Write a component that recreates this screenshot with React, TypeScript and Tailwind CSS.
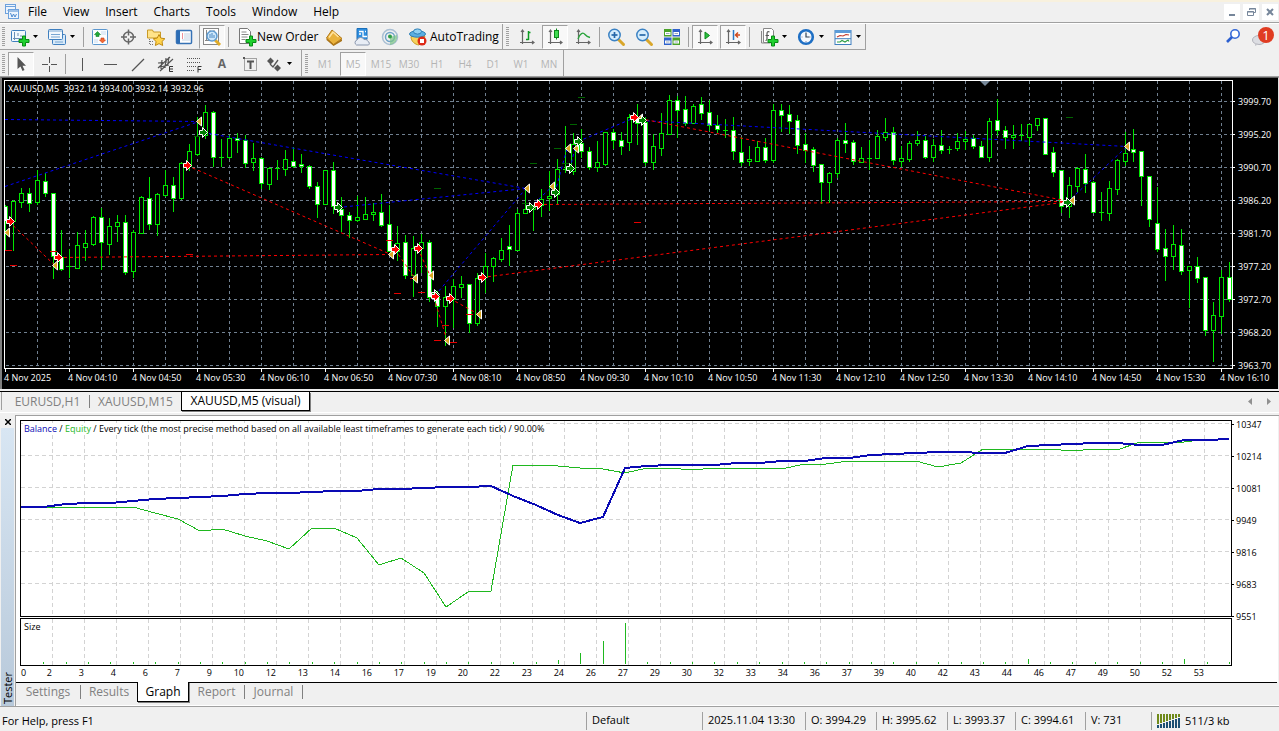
import { FC, ReactNode } from "react";

// [high, low, open, close], counted down from the top of the scale, 22 to a dollar
const candles: number[][] = [
  [382, 515, 384, 430], [366, 515, 430, 370], [331, 388, 371, 346], [331, 398, 346, 374],
  [277, 379, 371, 307], [286, 353, 310, 346], [346, 599, 346, 534], [457, 577, 537, 572],
  [514, 596, 564, 564], [462, 569, 569, 502], [457, 545, 506, 496], [415, 500, 497, 418],
  [389, 572, 418, 493], [421, 527, 497, 445], [411, 488, 445, 433], [411, 587, 433, 583],
  [457, 596, 578, 463], [353, 466, 464, 357], [298, 452, 360, 437], [346, 470, 437, 349],
  [275, 353, 350, 322], [298, 398, 322, 359], [252, 362, 359, 256], [198, 275, 265, 220],
  [117, 230, 227, 175], [81, 179, 170, 103], [100, 263, 103, 238], [182, 263, 237, 237],
  [170, 239, 236, 181], [166, 221, 179, 187], [170, 266, 187, 254], [194, 275, 253, 241],
  [238, 329, 241, 314], [268, 332, 317, 271], [245, 302, 271, 271], [215, 290, 272, 244],
  [206, 266, 248, 263], [228, 281, 257, 265], [262, 329, 265, 323], [312, 417, 325, 377],
  [277, 377, 377, 277], [252, 404, 277, 385], [358, 458, 394, 412], [403, 476, 412, 425],
  [354, 430, 425, 418], [358, 422, 422, 409], [376, 425, 409, 401], [349, 443, 401, 440],
  [382, 520, 439, 520], [445, 545, 518, 496], [472, 599, 493, 590], [475, 653, 590, 511],
  [468, 581, 511, 493], [485, 668, 493, 656], [640, 743, 656, 683], [625, 800, 683, 658],
  [602, 748, 662, 625], [595, 656, 626, 619], [619, 762, 619, 734], [586, 740, 734, 601],
  [526, 642, 598, 565], [536, 608, 563, 541], [480, 550, 542, 515], [442, 560, 505, 514],
  [392, 517, 517, 406], [330, 406, 406, 394], [380, 455, 394, 388], [334, 413, 380, 364],
  [280, 395, 361, 355], [243, 377, 349, 274], [145, 281, 274, 274], [166, 287, 278, 199],
  [152, 238, 196, 220], [208, 272, 220, 266], [190, 278, 268, 253], [163, 260, 257, 163],
  [154, 210, 163, 187], [163, 227, 187, 203], [109, 215, 191, 118], [79, 197, 118, 134],
  [118, 260, 133, 251], [168, 272, 251, 205], [105, 230, 209, 166], [51, 167, 167, 67],
  [54, 177, 67, 95], [54, 141, 94, 134], [78, 134, 134, 85], [57, 122, 79, 104],
  [67, 156, 103, 140], [111, 162, 141, 152], [123, 177, 155, 155], [117, 242, 157, 218],
  [178, 262, 223, 251], [205, 260, 250, 244], [189, 248, 248, 208], [180, 251, 208, 245],
  [78, 251, 245, 97], [78, 158, 97, 110], [81, 165, 109, 128], [111, 224, 127, 200],
  [165, 251, 199, 215], [207, 278, 214, 260], [259, 375, 259, 311], [281, 373, 311, 286],
  [180, 297, 284, 187], [135, 221, 187, 194], [187, 257, 193, 248], [207, 251, 251, 241],
  [186, 272, 239, 239], [156, 239, 239, 175], [120, 185, 176, 163], [147, 257, 163, 245],
  [204, 263, 248, 241], [189, 248, 242, 196], [159, 200, 194, 187], [175, 239, 187, 236],
  [183, 248, 236, 202], [156, 224, 202, 215], [205, 224, 212, 212], [165, 215, 209, 190],
  [160, 212, 190, 184], [171, 209, 181, 203], [189, 236, 205, 236], [120, 248, 236, 130],
  [63, 171, 127, 155], [144, 209, 157, 176], [141, 209, 176, 170], [138, 185, 172, 172],
  [139, 200, 176, 139], [121, 155, 140, 121], [121, 227, 121, 227], [207, 293, 223, 281],
  [277, 402, 277, 383], [297, 416, 383, 322], [268, 342, 323, 271], [228, 342, 274, 314],
  [308, 401, 313, 401], [342, 425, 402, 402], [309, 425, 404, 331], [243, 347, 332, 247],
  [162, 262, 248, 226], [153, 248, 214, 221], [220, 380, 220, 293], [295, 443, 295, 422],
  [327, 520, 436, 512], [453, 605, 511, 533], [441, 572, 533, 499], [453, 587, 502, 578],
  [565, 686, 575, 565], [537, 611, 565, 599], [598, 770, 598, 755], [672, 848, 755, 712],
  [576, 766, 713, 598], [552, 668, 598, 662],
];

// trade lines: x1, y1, x2, y2
const buyLines = [
  [0, 38, 194, 40], [0, 105, 194, 40], [198, 51, 521, 107], [333, 126, 521, 107],
  [430, 214, 521, 107], [525, 126, 547, 105], [550, 111, 562, 67], [565, 87, 570, 67],
  [573, 60, 630, 36], [636, 39, 1122, 65], [1062, 121, 1122, 65],
];
const sellLines = [
  [4, 140, 50, 184], [53, 176, 386, 173], [182, 84, 386, 173], [390, 168, 410, 197],
  [413, 167, 425, 194], [429, 216, 442, 259], [445, 217, 474, 233], [477, 196, 1065, 120],
  [533, 123, 1065, 120], [629, 36, 1065, 120],
];
const sellStops = [
  [0, 169], [5, 184], [45, 170], [181, 173], [381, 159], [389, 212], [413, 211], [405, 197],
  [429, 259], [445, 261], [437, 244], [461, 233], [629, 141],
];
const buyStops = [
  [429, 107], [525, 82], [549, 67], [565, 43], [573, 16], [517, 122], [557, 82], [1061, 36], [189, 55],
];
const buys = [
  [198, 51], [333, 126], [430, 213], [525, 126], [550, 111], [565, 87], [573, 60], [637, 39], [1062, 121],
];
const sells = [
  [5, 140], [53, 176], [182, 84], [390, 168], [413, 167], [430, 215], [445, 217], [477, 196], [533, 123], [629, 36],
];
const closes = [
  [2, 151], [50, 184], [194, 40], [386, 173], [410, 197], [426, 194], [442, 259], [474, 233],
  [522, 107], [547, 105], [563, 67], [571, 67], [635, 37], [1122, 65], [1067, 119],
];

const prices = ["3999.70", "3995.20", "3990.70", "3986.20", "3981.70", "3977.20", "3972.70", "3968.20", "3963.70"];
const times = [
  "2025", "04:10", "04:50", "05:30", "06:10", "06:50", "07:30", "08:10", "08:50", "09:30",
  "10:10", "10:50", "11:30", "12:10", "12:50", "13:30", "14:10", "14:50", "15:30", "16:10",
];

const balance = [
  290, 290, 283, 280, 278, 273, 267, 265, 261, 257, 253, 250, 248, 247, 244, 242, 238, 237, 235, 232,
  230, 227, 258, 284, 316, 340, 322, 174, 169, 166, 165, 164, 159, 158, 153, 152, 145, 144, 136, 132,
  129, 126, 126, 129, 129, 108, 106, 102, 99, 99, 105, 105, 90, 90, 87,
];
const equity = [
  290, 292, 290, 295, 290, 290, 309, 328, 364, 358, 377, 394, 418, 355, 355, 384, 466, 445, 488, 592,
  545, 544, 166, 166, 169, 173, 178, 189, 174, 175, 181, 173, 173, 173, 176, 163, 163, 154, 154, 157,
  154, 172, 159, 118, 118, 118, 118, 122, 118, 121, 97, 97, 97, 87, 87,
];
const bigSizes: Record<number, number> = { 24: 4, 25: 11, 26: 23, 27: 41, 45: 5, 52: 5 };
const equityScale = ["10347", "10214", "10081", "9949", "9816", "9683", "9551"];
const tradeNumbers = [
  3, 4, 6, 7, 9, 10, 12, 13, 14, 16, 17, 19, 20, 22, 23, 24, 26, 27, 29, 30, 32, 33, 34, 36, 37, 39,
  40, 42, 43, 44, 46, 47, 49, 50, 52, 53,
];

const range = (n: number) => Array.from({ length: n }, (_, i) => i);
const level = (v: number) => Math.round(v / 3) - 3;
const curve = (values: number[]) =>
  values.map((v, i) => `${Math.round(i * 22.37)},${Math.round(v / 3) - 11}`).join(" ");

interface IconProps {
  children: ReactNode;
}

const Icon: FC<IconProps> = ({ children }) => (
  <svg viewBox="0 0 20 20" className="h-5 w-5 shrink-0" fill="none" aria-hidden="true">
    {children}
  </svg>
);

const Plus = () => (
  <path d="M12.5 9h3v3.500h3.500v3h-3.500v3.500h-3v-3.500h-3.500v-3h3.500z" fill="#1fd02f" stroke="#078a14" />
);

const NewChartIcon = () => (
  <Icon>
    <rect x="1.500" y="3.500" width="14" height="11" rx="1" fill="#f2f8fd" stroke="#3f7fbf" />
    <path d="M4.500 5v8M3 11.500h9M4 6.500h1M8 6v3M11 8v2" stroke="#6a8fb5" />
    <Plus />
  </Icon>
);
const ProfilesIcon = () => (
  <Icon>
    <rect x="5.500" y="7.500" width="13" height="10" rx="1" fill="#d7e9f8" stroke="#3f7fbf" />
    <rect x="1.500" y="2.500" width="14" height="10" rx="1" fill="#f2f8fd" stroke="#3f7fbf" />
    <path d="M2 4h13M4 7.500h9M4 10h9" stroke="#78a6d2" />
    <path d="M8 15h8" stroke="#78a6d2" />
  </Icon>
);
const MarketIcon = () => (
  <Icon>
    <rect x="2.500" y="2.500" width="15" height="15" rx="1" fill="#fbfdff" stroke="#5b97cf" />
    <path d="M11 5h5M11 7h5M4 13h4M4 15h4" stroke="#c9dcef" />
    <path d="M7.500 4.500l3 3H9v2H6v-2H4.500z" fill="#22a93a" stroke="#118526" strokeWidth=".6" />
    <path d="M12.500 16l-3-3H11v-2h3v2h1.500z" fill="#f36a35" stroke="#cc3d12" strokeWidth=".6" />
  </Icon>
);
const TargetIcon = () => (
  <Icon>
    <circle cx="10.500" cy="10" r="5" stroke="#666" strokeWidth="1.500" />
    <path d="M10.500 2.500v6M10.500 11.500v6M3 10h6M12 10h6" stroke="#666" strokeWidth="1.500" />
  </Icon>
);
const FolderStarIcon = () => (
  <Icon>
    <path d="M1.500 3h5l1 2h7v6h-13z" fill="#ffe38a" stroke="#c99a26" />
    <path d="M3.500 12v5.500M4 14.500h4M4 17.500h4" stroke="#777" strokeDasharray="1 1" />
    <path d="M13 7.500l1.900 3.600 4 .6-2.900 2.800.7 4-3.700-1.900-3.600 1.900.7-4L7.200 11.700l4-.6z" fill="#ffd34d" stroke="#c08a10" />
  </Icon>
);
const TerminalIcon = () => (
  <Icon>
    <rect x="2.500" y="3.500" width="15" height="13" rx="1" fill="#fff" stroke="#3672b5" strokeWidth="1.500" />
    <rect x="3" y="4" width="3" height="12" fill="#2c6db5" />
    <path d="M8 7h1M8 9h1M8 11h1" stroke="#d23" />
    <path d="M10 7h6M10 9h6M10 11h6M8 13h8" stroke="#c3d3e4" />
  </Icon>
);
const TesterIcon = () => (
  <Icon>
    <rect x="1.500" y="1.500" width="15" height="16" fill="#fff" stroke="#888" />
    <path d="M4.500 3v11M8 3v4M12 3v4M3 13.500h6" stroke="#888" />
    <path d="M13 13l5 5" stroke="#e0ac2a" strokeWidth="3" />
    <circle cx="10" cy="9" r="5" fill="#cfe8fb" stroke="#5f9bd0" strokeWidth="1.500" />
    <path d="M8 7v4M10 6v5M12 8v3" stroke="#4a88c2" />
  </Icon>
);
const NewOrderIcon = () => (
  <Icon>
    <path d="M2.500 1.500h8l3 3v12h-11z" fill="#fff" stroke="#777" />
    <path d="M4.500 5h5M4.500 7.500h7M4.500 10h6M4.500 12.500h4" stroke="#888" />
    <Plus />
  </Icon>
);
const GoldIcon = () => (
  <Icon>
    <path d="M2.500 11l7 6 8.500-5v2l-8.500 5-7-6z" fill="#a9741a" />
    <path d="M2.500 11L8 3l10 8.500-8.500 6z" fill="#e9b23c" stroke="#b27816" />
    <path d="M5 10.500l4-5.500 5.500 5" stroke="#ffe3a0" strokeWidth="1.500" />
  </Icon>
);
const HostingIcon = () => (
  <Icon>
    <path d="M5 1.500h10v11H5z" fill="#2f8fe0" stroke="#1b6fb9" />
    <path d="M7 4.500h4v5h4M13 4.500h1M7 7h2" stroke="#fff" strokeWidth="1.300" />
    <path d="M4.500 18a2.700 2.700 0 01.5-5 3.800 3.800 0 017-.5 3.300 3.300 0 014 2 2 2 0 01.5 3.500z" fill="#e8edf5" stroke="#8996ad" />
  </Icon>
);
const SignalIcon = () => (
  <Icon>
    <circle cx="10" cy="10" r="7.500" stroke="#a9bfd3" strokeWidth="1.500" />
    <circle cx="10" cy="10" r="4.500" stroke="#6fa3c9" strokeWidth="1.500" />
    <path d="M10 10v8a8 8 0 007-10" fill="#7cc486" opacity=".7" />
    <circle cx="10" cy="9.500" r="2" fill="#2f9e47" />
  </Icon>
);
const AutoIcon = () => (
  <Icon>
    <path d="M3 9.500c0 5 4 8 8 8.500l6-8.500z" fill="#f6d25b" stroke="#c69a24" />
    <ellipse cx="9.500" cy="7" rx="8" ry="3.200" fill="#5aaee0" stroke="#2d7fb6" />
    <ellipse cx="9.500" cy="4.500" rx="4" ry="2.600" fill="#8fd0f2" stroke="#2d7fb6" />
    <circle cx="14" cy="14" r="4.500" fill="#dd2a17" />
    <rect x="12" y="12" width="4" height="4" fill="#fff" />
  </Icon>
);

const Axes = () => <path d="M5.500 3v14M3 15.500h14M4 5l1.500-2L7 5M15 14l2 1.500-2 1.500" stroke="#666" strokeWidth="1.200" />;

const BarsIcon = () => (
  <Icon>
    <Axes />
    <path d="M11.500 4v9M9 12.500h2.500M11.500 5.500h2" stroke="#0c9a22" strokeWidth="1.500" />
  </Icon>
);
const CandlesIcon = () => (
  <Icon>
    <Axes />
    <path d="M11.500 1.500v11" stroke="#0c8a1c" />
    <rect x="9.500" y="3.500" width="4" height="7" fill="#3fdc50" stroke="#0c8a1c" />
  </Icon>
);
const LineIcon = () => (
  <Icon>
    <Axes />
    <path d="M5 12c2-6 5-7 7-4.500 1.500 1.800 3 2.500 5 3" stroke="#27a33a" strokeWidth="1.300" />
  </Icon>
);
const LensIcon: FC<{ zoomIn?: boolean }> = ({ zoomIn }) => (
  <Icon>
    <path d="M12.500 12.500l5 5" stroke="#d9a62a" strokeWidth="3" strokeLinecap="round" />
    <circle cx="8.500" cy="8" r="5.700" fill="#d5edfc" stroke="#3b82c4" strokeWidth="1.500" />
    <path d="M5.500 8h6" stroke="#2567a8" strokeWidth="1.700" />
    {zoomIn && <path d="M8.500 5v6" stroke="#2567a8" strokeWidth="1.700" />}
  </Icon>
);
const TileIcon = () => (
  <Icon>
    <rect x="2" y="2" width="7.500" height="7.500" fill="#4aa32a" />
    <rect x="10.500" y="2" width="7.500" height="7.500" fill="#2f62cc" />
    <rect x="2" y="10.500" width="7.500" height="7.500" fill="#2f62cc" />
    <rect x="10.500" y="10.500" width="7.500" height="7.500" fill="#4aa32a" />
    <path d="M3 6.500h5.500M11.500 6.500H17M3 15h5.500M11.500 15H17" stroke="#fff" strokeWidth="3" />
    <path d="M4 6.500h3.500M12.500 6.500H16M4 15h3.500M12.500 15H16" stroke="#9ab" />
  </Icon>
);
const ScrollIcon = () => (
  <Icon>
    <Axes />
    <path d="M10 5v7l4.500-3.500z" fill="#2bbf3f" stroke="#0c8a1c" />
  </Icon>
);
const ShiftIcon = () => (
  <Icon>
    <Axes />
    <path d="M10.500 3v10" stroke="#2a78c4" strokeWidth="1.500" />
    <path d="M17 8h-4M15 5.500L12.500 8l2.500 2.500" stroke="#d04a1c" strokeWidth="1.500" />
  </Icon>
);
const IndicatorsIcon = () => (
  <Icon>
    <path d="M4.500 1.500h8l2 2v12h-10z" fill="#fff" stroke="#888" />
    <path d="M2.500 4v12h9" stroke="#888" />
    <path d="M10.500 5c-2-1-2.500 0-2.500 2v5c0 1-.5 1.500-1.500 1.500M6.500 8.500h3.500" stroke="#555" strokeWidth="1.200" />
    <Plus />
  </Icon>
);
const ClockIcon = () => (
  <Icon>
    <circle cx="10" cy="10" r="6.800" fill="#f4f9fe" stroke="#1e6fc4" strokeWidth="2.600" />
    <path d="M10 5.500V10h3.500" stroke="#345" strokeWidth="1.200" />
    <path d="M10 15v-1M5.500 10h1M14.500 10h-1" stroke="#88a" />
  </Icon>
);
const TemplateIcon = () => (
  <Icon>
    <rect x="2" y="3.500" width="16" height="14" fill="#fff" stroke="#3f7fbf" />
    <rect x="2" y="3" width="16" height="3" fill="#5b9bd8" />
    <path d="M4 10l3-1.500 3 .5 3-1.500 3 .5" stroke="#c0392b" strokeWidth="1.200" />
    <path d="M4 15h3l2-1.500 3 1.500 3-2 1 1.500" stroke="#2f9e47" strokeWidth="1.200" />
    <path d="M2 11.700h16" stroke="#3f7fbf" />
  </Icon>
);

interface ButtonProps {
  label: string;
  children: ReactNode;
  pressed?: boolean;
}

const ToolButton: FC<ButtonProps> = ({ label, children, pressed }) => (
  <button
    aria-label={label}
    aria-pressed={pressed}
    className={
      pressed
        ? "mx-px flex h-6 w-[26px] items-center justify-center border border-t-[#a0a0a0] border-r-white border-b-white border-l-[#a0a0a0] bg-[#f8f8f8]"
        : "flex h-6 w-7 items-center justify-center"
    }
  >
    {children}
  </button>
);

const Caret = () => <svg viewBox="0 0 5 3" className="h-[3px] w-[5px]"><path d="M0 0h5L2.500 3z" /></svg>;

const DropButton: FC<ButtonProps> = ({ label, children }) => (
  <button aria-label={label} aria-haspopup="menu" className="flex h-6 items-center gap-[3px]">
    {children}
    <Caret />
  </button>
);

const Divider = () => <div className="mx-[2px] h-5 w-px bg-[#a0a0a0]" />;
const Grip = () => (
  <div className="ml-[2px] h-5 w-[3px] bg-[repeating-linear-gradient(#a0a0a0_0_1px,transparent_1px_2px)]" />
);

const MenuBar = () => (
  <div className="flex h-[21px] items-center border-b border-[#a0a0a0] pl-1">
    <svg viewBox="0 0 16 16" className="h-4 w-4" fill="none">
      <rect x="1.500" y=".5" width="10" height="9" fill="#eef5fd" stroke="#6ea2dc" />
      <path d="M2 2.500h9M3.500 7l2-2 1.500 2 2-2" stroke="#6ea2dc" />
      <rect x="4.500" y="5.500" width="10" height="9" fill="#eef5fd" stroke="#6ea2dc" />
      <path d="M5 7h9M6.500 9l1.500 4 1.500-3 1.500 3 1.500-3" stroke="#4f8bd0" />
    </svg>
    <nav className="flex flex-1 gap-4 pl-2">
      {["File", "View", "Insert", "Charts", "Tools", "Window", "Help"].map((item) => (
        <button key={item}>{item}</button>
      ))}
    </nav>
    <div className="flex gap-[3px] pr-px text-[#76869a]">
      <button aria-label="Minimize" className="flex h-4 w-4 justify-center bg-white">
        <svg viewBox="0 0 16 16" className="h-4 w-4"><path d="M5 10h6v2H5z" fill="currentColor" /></svg>
      </button>
      <button aria-label="Restore" className="h-4 w-4 bg-white">
        <svg viewBox="0 0 16 16" className="h-4 w-4" fill="none" stroke="currentColor">
          <path d="M6.500 6V4.500h6v4H11M6 5h7" />
          <path d="M4.500 7.500h6v4h-6zM4 8h7" />
        </svg>
      </button>
      <button aria-label="Close" className="h-4 w-4 bg-white">
        <svg viewBox="0 0 16 16" className="h-4 w-4"><path d="M5 5l6 6M11 5l-6 6" stroke="currentColor" strokeWidth="2" /></svg>
      </button>
    </div>
  </div>
);

const MainToolbar = () => (
  <div className="flex h-[27px] items-start border-t border-white">
    <div className="flex h-[26px] items-center border-r border-b border-[#a0a0a0]">
      <Grip />
      <div className="flex gap-[9px] pr-[6px] pl-[5px]">
        <DropButton label="New chart"><NewChartIcon /></DropButton>
        <DropButton label="Profiles"><ProfilesIcon /></DropButton>
      </div>
      <Divider />
      <ToolButton label="Market Watch"><MarketIcon /></ToolButton>
      <ToolButton label="Data Window"><TargetIcon /></ToolButton>
      <ToolButton label="Navigator"><FolderStarIcon /></ToolButton>
      <ToolButton label="Terminal"><TerminalIcon /></ToolButton>
      <ToolButton label="Strategy Tester" pressed><TesterIcon /></ToolButton>
      <Divider />
      <button className="flex h-6 w-[89px] items-center pl-[6px] whitespace-nowrap">
        <NewOrderIcon />
        New Order
      </button>
      <ToolButton label="MetaEditor"><GoldIcon /></ToolButton>
      <ToolButton label="Virtual hosting"><HostingIcon /></ToolButton>
      <ToolButton label="Signals"><SignalIcon /></ToolButton>
      <button className="flex h-6 w-[98px] items-center gap-[2px] pl-1 whitespace-nowrap">
        <AutoIcon />
        AutoTrading
      </button>
    </div>
    <div className="flex h-[26px] items-center border-r border-b border-[#a0a0a0] pl-px">
      <Grip />
      <div className="w-1" />
      <ToolButton label="Bar chart"><BarsIcon /></ToolButton>
      <ToolButton label="Candlesticks" pressed><CandlesIcon /></ToolButton>
      <ToolButton label="Line chart"><LineIcon /></ToolButton>
      <Divider />
      <ToolButton label="Zoom in"><LensIcon zoomIn /></ToolButton>
      <ToolButton label="Zoom out"><LensIcon /></ToolButton>
      <ToolButton label="Tile windows"><TileIcon /></ToolButton>
      <Divider />
      <ToolButton label="Auto scroll" pressed><ScrollIcon /></ToolButton>
      <ToolButton label="Chart shift" pressed><ShiftIcon /></ToolButton>
      <Divider />
      <div className="flex gap-[9px] pr-1 pl-[7px]">
        <DropButton label="Indicators"><IndicatorsIcon /></DropButton>
        <DropButton label="Periods"><ClockIcon /></DropButton>
        <DropButton label="Templates"><TemplateIcon /></DropButton>
      </div>
    </div>
    <div className="flex flex-1 items-center justify-end gap-[10px] pr-1">
      <button aria-label="Search">
        <svg viewBox="0 0 16 16" className="h-4 w-4" fill="none">
          <circle cx="10" cy="6" r="4.200" fill="#fff" stroke="#3569d8" strokeWidth="1.600" />
          <path d="M7 9l-5 5" stroke="#2b5fd0" strokeWidth="2.600" />
        </svg>
      </button>
      <button aria-label="1 new message">
        <svg viewBox="0 0 24 24" className="h-6 w-6">
          <ellipse cx="8" cy="16" rx="6.500" ry="4.500" fill="#dcdde2" stroke="#b0b1b8" />
          <path d="M4 19v3l4-2z" fill="#c5c6cc" />
          <circle cx="15" cy="11" r="8" fill="#e03c22" />
          <text x="15" y="16" textAnchor="middle" fontSize="13" fill="#fff">1</text>
        </svg>
      </button>
    </div>
  </div>
);

const DrawToolbar = () => (
  <div className="flex h-[26px] items-stretch">
    <div className="flex items-center border-r border-[#a0a0a0] pt-px">
      <Grip />
      <div className="w-[2px]" />
      <ToolButton label="Cursor" pressed>
        <Icon><path d="M6.500 3v12l3-2.500 2 4.500 2-1-2-4.300h3.500z" fill="#555" /></Icon>
      </ToolButton>
      <ToolButton label="Crosshair">
        <Icon><path d="M10.500 3v6M10.500 12v6M3 10.500h6M12 10.500h6" stroke="#555" /></Icon>
      </ToolButton>
      <Divider />
      <ToolButton label="Vertical line"><Icon><path d="M10.500 4v13" stroke="#555" /></Icon></ToolButton>
      <ToolButton label="Horizontal line"><Icon><path d="M4 10.500h13" stroke="#555" /></Icon></ToolButton>
      <ToolButton label="Trendline"><Icon><path d="M4 17L16 5" stroke="#555" strokeWidth="1.200" /></Icon></ToolButton>
      <ToolButton label="Equidistant channel">
        <Icon>
          <path d="M2 14L14 3M4 17L17 5M2 9l9-1M4 13l9-2M6 6l-1 9M10 4l-1 10M13 3l-1 6" stroke="#555" strokeWidth="1.200" />
          <path d="M17 12.500h-3.500v5H17M14 15h3" stroke="#333" />
        </Icon>
      </ToolButton>
      <ToolButton label="Fibonacci retracement">
        <Icon>
          <path d="M3 4.500h14M3 8.500h14M3 12.500h10M3 16.500h8" stroke="#555" strokeDasharray="1 1" />
          <path d="M17.500 12.500h-3.500v6M14 15.500h3" stroke="#333" />
        </Icon>
      </ToolButton>
      <ToolButton label="Text"><span className="text-[12px] font-bold text-[#666]">A</span></ToolButton>
      <ToolButton label="Text label">
        <Icon>
          <path d="M4.500 4.500h12v12h-12z" stroke="#555" strokeDasharray="1 1" />
          <path d="M7 7.500h7M10.500 7v8" stroke="#555" strokeWidth="2" />
          <path d="M3 3h2v2H3z" fill="#555" />
        </Icon>
      </ToolButton>
      <div className="pr-[9px]">
        <DropButton label="Arrows">
          <Icon>
            <path d="M3 7l3.500-3.500L10 7 6.500 10.500zM10 14l3.500-3.500L17 14l-3.500 3.500z" fill="#555" />
            <path d="M6 10l3 3 5-7" stroke="#555" strokeWidth="1.300" />
          </Icon>
        </DropButton>
      </div>
    </div>
    <div className="flex items-center border-r border-[#a0a0a0] pt-px pl-px text-[10px] text-[#b4b4b4]">
      <Grip />
      <div className="w-[3px]" />
      {["M1", "M5", "M15", "M30", "H1", "H4", "D1", "W1", "MN"].map((period) => (
        <ToolButton key={period} label={period} pressed={period === "M5"}>{period}</ToolButton>
      ))}
    </div>
  </div>
);

const PriceChart = () => (
  <svg className="absolute inset-0 h-full w-full" fill="none">
    <g stroke="#708090" strokeDasharray="3 3" shapeRendering="crispEdges">
      {range(80).map((i) => <line key={i} x1={32.5 + i * 32} y1="0" x2={32.5 + i * 32} y2="2000" />)}
      {range(40).map((i) => <line key={i} x1="1" y1={20.5 + i * 33} x2="3000" y2={20.5 + i * 33} />)}
    </g>
    {candles.map(([high, low, open, close], i) => {
      const top = level(Math.min(open, close));
      const height = Math.abs(level(open) - level(close));
      return (
        <g key={i} stroke="#00e600">
          <path d={`M${i * 8 + 0.5} ${level(high)}V${level(low) + 1}`} />
          {height ? (
            <rect x={i * 8 - 1.5} y={top + 0.5} width="4" height={height} fill={open > close ? "#000" : "#fff"} />
          ) : (
            <path d={`M${i * 8 - 2} ${top + 0.5}h5`} />
          )}
        </g>
      );
    })}
    <g stroke="#0000ff" strokeDasharray="3 3">
      {buyLines.map(([x1, y1, x2, y2], i) => <line key={i} x1={x1} y1={y1 + 0.5} x2={x2} y2={y2 + 0.5} />)}
    </g>
    <g stroke="#ff0000" strokeDasharray="3 3">
      {sellLines.map(([x1, y1, x2, y2], i) => <line key={i} x1={x1} y1={y1 + 0.5} x2={x2} y2={y2 + 0.5} />)}
    </g>
    {sellStops.map(([x, y], i) => <rect key={i} x={x} y={y} width="7" height="1" fill="#e60000" />)}
    {buyStops.map(([x, y], i) => <rect key={i} x={x} y={y} width="7" height="1" fill="#006400" />)}
    <g fill="#daa520" stroke="#fff">
      {closes.map(([x, y], i) => <path key={i} d={`M${x + 2.5} ${y - 4}v9l-5-4.500z`} />)}
    </g>
    <g fill="#008000" stroke="#fff">
      {buys.map(([x, y], i) => <path key={i} d={`M${x - 3.5} ${y - 1.5}h3v-3l5 5-5 5v-3h-3z`} />)}
    </g>
    <g fill="#f00" stroke="#fff">
      {sells.map(([x, y], i) => <path key={i} d={`M${x - 3.5} ${y - 1.5}h3v-3l5 5-5 5v-3h-3z`} />)}
    </g>
    <path d="M975 0h10l-5 5z" fill="#778899" />
  </svg>
);

const ChartWindow = () => (
  <main className="flex min-h-0 flex-1 flex-col border-t border-r border-l-2 border-t-[#606060] border-r-[#e0e0e0] border-l-[#808080] bg-black pt-[2px] pl-[2px] text-[9px] text-white">
    <div className="flex min-h-0 flex-1">
      <div className="relative flex-1 overflow-hidden border border-white">
        <PriceChart />
        <p className="absolute top-px left-[3px] leading-[14px] whitespace-pre">
          XAUUSD,M5{"  "}3932.14 3934.00 3932.14 3932.96
        </p>
      </div>
      <div className="w-[45px] pt-[5px]">
        {prices.map((price) => (
          <div key={price} className="flex h-[33px] items-center gap-[3px]">
            <span className="h-px w-[2px] bg-white" />
            {price}
          </div>
        ))}
      </div>
    </div>
    <div className="flex h-5 shrink-0">
      {times.map((time) => (
        <div key={time} className="w-16 shrink-0 whitespace-nowrap">
          <div className="ml-px h-[3px] w-px bg-white" />
          <div className="leading-[12px]">4 Nov {time}</div>
        </div>
      ))}
    </div>
  </main>
);

const ChartTabs = () => (
  <div className="flex h-[26px] shrink-0 flex-col border-t-2 border-[#f0f0f0]">
    <div className="flex h-[19px] border-t border-black">
      <div className="ml-px w-px bg-[#a0a0a0]" />
      <div role="tablist" className="flex h-[19px] flex-1 items-center">
        <button role="tab" className="w-[88px] border-r border-[#808080] pl-1 leading-[13px] text-[#808080]">EURUSD,H1</button>
        <button role="tab" className="w-[91px] leading-[13px] text-[#808080]">XAUUSD,M15</button>
        <button role="tab" aria-selected="true" className="-mt-px h-[19px] w-[129px] border border-t-0 border-black bg-white leading-[17px] shadow-[1px_1px_0_#808080]">
          XAUUSD,M5 (visual)
        </button>
      </div>
      <div className="flex items-center gap-[15px] pr-2">
        <button aria-label="Scroll tabs left"><svg viewBox="0 0 4 7" className="h-[7px] w-1" fill="#909090"><path d="M4 0v7L0 3.500z" /></svg></button>
        <button aria-label="Scroll tabs right"><svg viewBox="0 0 4 7" className="h-[7px] w-1" fill="#909090"><path d="M0 0v7l4-3.500z" /></svg></button>
      </div>
    </div>
    <div className="mt-[2px] h-px bg-white" />
  </div>
);

const TesterGraph = () => (
  <div className="mr-px flex flex-col bg-white pt-1 pl-1 text-[9px]">
    <div className="flex">
      <div className="relative h-[197px] flex-1 overflow-hidden border border-black">
        <svg className="absolute inset-0 h-full w-full" shapeRendering="crispEdges" fill="none">
          <g stroke="#d3d3d3" strokeDasharray="4 3">
            {range(80).map((i) => <line key={i} x1={31.5 + i * 32} y1="0" x2={31.5 + i * 32} y2="200" />)}
            {range(6).map((i) => <line key={i} x1="0" y1={2.5 + i * 32} x2="3000" y2={2.5 + i * 32} />)}
          </g>
          <polyline points={curve(equity)} stroke="#1fb81f" />
          <polyline points={curve(balance)} stroke="#0a0ab4" strokeWidth="2" />
        </svg>
        <p className="absolute top-[2px] left-[2px] bg-white px-px leading-[12px] whitespace-nowrap">
          <span className="text-[#0a0ab4]">Balance</span> / <span className="text-[#1fb81f]">Equity</span> / Every tick
          (the most precise method based on all available least timeframes to generate each tick) / 90.00%
        </p>
      </div>
      <div className="w-[46px]">
        {equityScale.map((value) => (
          <div key={value} className="h-8 last:h-0">
            <div className="flex h-[9px] items-center gap-[2px] leading-[9px]">
              <span className="h-px w-[2px] bg-black" />
              {value}
            </div>
          </div>
        ))}
      </div>
    </div>
    <div className="relative mt-px mr-[46px] h-12 overflow-hidden border border-black">
      <svg className="absolute inset-0 h-full w-full" shapeRendering="crispEdges">
        <g stroke="#d3d3d3" strokeDasharray="4 3">
          {range(80).map((i) => <line key={i} x1={31.5 + i * 32} y1="0" x2={31.5 + i * 32} y2="46" />)}
        </g>
        {balance.slice(1).map((_, i) => {
          const size = bigSizes[i + 1] ?? 2;
          return <rect key={i} x={Math.round((i + 1) * 22.37)} y={45 - size} width="1" height={size} fill="#1fb81f" />;
        })}
      </svg>
      <p className="absolute top-[2px] left-[2px] bg-white px-px leading-[12px]">Size</p>
    </div>
    <div className="flex h-4 overflow-hidden pt-px leading-[12px]">
      <div className="flex w-8 shrink-0 items-start justify-between pl-px">
        <span>0</span>
        <span>2</span>
      </div>
      {tradeNumbers.map((n) => (
        <div key={n} className="w-8 shrink-0 text-right">{n}</div>
      ))}
    </div>
  </div>
);

const TesterPanel = () => (
  <section className="flex shrink-0">
    <div className="flex w-[15px] flex-col">
      <button aria-label="Close tester" className="flex h-[13px] items-center justify-center">
        <svg viewBox="0 0 6 6" className="h-[6px] w-[6px]"><path d="M0 0l6 6M6 0L0 6" stroke="#000" strokeWidth="1.500" /></svg>
      </button>
      <div className="ml-px flex w-[13px] flex-1 items-center bg-linear-to-b from-[#d8e6f3] to-[#b8c9da] py-[2px] text-[11px] leading-[13px]">
        <span className="mt-auto rotate-180 [writing-mode:vertical-rl]">Tester</span>
      </div>
    </div>
    <div className="flex min-w-0 flex-1 flex-col border-t border-l border-[#a0a0a0]">
      <TesterGraph />
      <div role="tablist" className="mr-[2px] flex h-[23px] items-start border-t border-black text-[#808080]">
        <button role="tab" className="mt-[2px] w-[65px] border-r border-[#808080] leading-[14px]">Settings</button>
        <button role="tab" className="mt-[2px] w-14 leading-[14px]">Results</button>
        <button role="tab" aria-selected="true" className="-mt-px h-5 w-[52px] border border-t-0 border-black bg-white leading-[20px] text-black shadow-[1px_1px_0_#808080]">
          Graph
        </button>
        <button role="tab" className="mt-[2px] w-14 border-r border-[#808080] leading-[14px]">Report</button>
        <button role="tab" className="mt-[2px] w-[58px] border-r border-[#808080] leading-[14px]">Journal</button>
      </div>
      <div className="h-px bg-white" />
    </div>
  </section>
);

const StatusBar = () => (
  <footer className="flex h-[25px] shrink-0 items-center border-t border-[#a0a0a0] pt-1 text-[11px] whitespace-nowrap [&>div]:h-[18px] [&>div]:border-l [&>div]:border-[#a0a0a0] [&>div]:pl-[5px]">
    <p className="flex-1 pl-[2px]">For Help, press F1</p>
    <div className="w-[116px]">Default</div>
    <div className="w-[103px]">2025.11.04 13:30</div>
    <div className="w-[71px]">O: 3994.29</div>
    <div className="w-[71px]">H: 3995.62</div>
    <div className="w-[68px]">L: 3993.37</div>
    <div className="w-[70px]">C: 3994.61</div>
    <div className="w-[66px]">V: 731</div>
    <div className="flex w-[128px] items-center gap-1">
      <svg viewBox="0 0 24 14" className="h-[14px] w-6" shapeRendering="crispEdges">
        {range(8).map((i) => (
          <g key={i}>
            <rect x={i * 3} y="0" width="2" height={10 - i} fill="#6f8a1a" />
            <rect x={i * 3} y={11 - i} width="2" height={3 + i} fill="#1c4f73" />
          </g>
        ))}
      </svg>
      511/3 kb
    </div>
  </footer>
);

const App = () => (
  <div className="flex h-screen min-h-[560px] flex-col overflow-hidden bg-[#f0f0f0] font-['Open_Sans','Noto_Sans',sans-serif] text-[12px] leading-[16px] text-black">
    <div className="h-[2px] shrink-0 bg-[#f8f1de]" />
    <header className="shrink-0 border-b border-[#a0a0a0]">
      <MenuBar />
      <MainToolbar />
      <DrawToolbar />
    </header>
    <ChartWindow />
    <ChartTabs />
    <TesterPanel />
    <StatusBar />
  </div>
);

export default App;
